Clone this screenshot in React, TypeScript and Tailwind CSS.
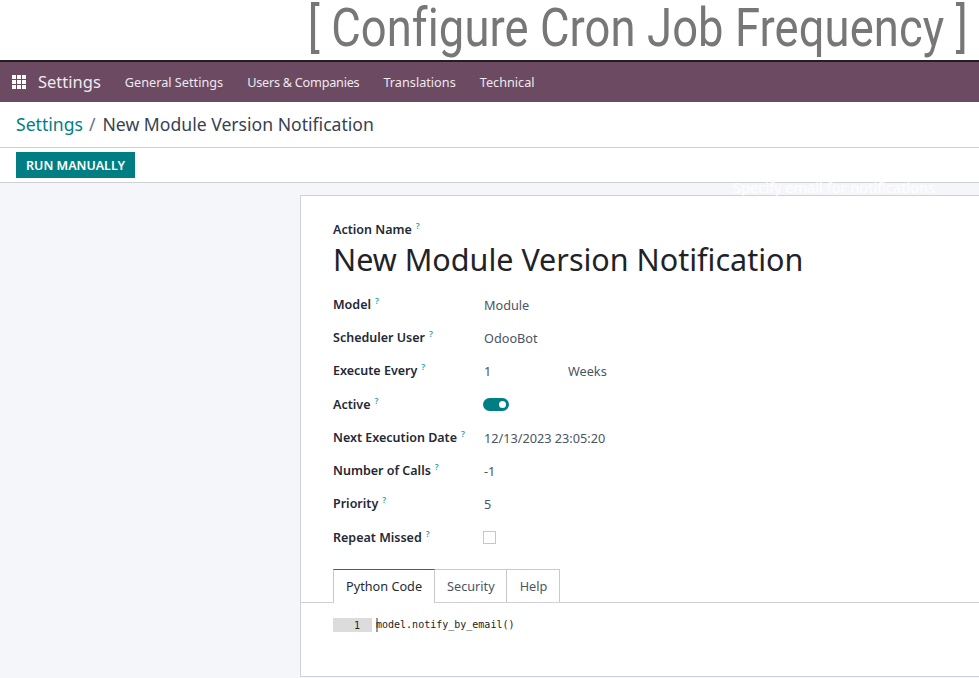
import React from "react";

const rows: { label: string; value: React.ReactNode }[] = [
  { label: "Model", value: "Module" },
  { label: "Scheduler User", value: "OdooBot" },
  {
    label: "Execute Every",
    value: (
      <span className="flex">
        <span className="w-[84px]">1</span>
        <span>Weeks</span>
      </span>
    ),
  },
  {
    label: "Active",
    value: (
      <span className="-ml-px -mt-px flex h-[13px] w-[26px] items-center justify-end rounded-full bg-[#017e84] pr-[3px]">
        <span className="h-[7px] w-[7px] rounded-full bg-white" />
      </span>
    ),
  },
  { label: "Next Execution Date", value: "12/13/2023 23:05:20" },
  { label: "Number of Calls", value: "-1" },
  { label: "Priority", value: "5" },
  {
    label: "Repeat Missed",
    value: <span className="-ml-px block h-[13px] w-[13px] border border-[#c4c7cc] bg-white" />,
  },
];

const Help = () => (
  <span className="relative top-[-5px] ml-[4px] align-baseline text-[8.5px] font-semibold leading-none text-[#17a2b8]">?</span>
);

export default function App() {
  return (
    <div className="relative h-[678px] w-[979px] overflow-hidden bg-white font-['Noto_Sans',sans-serif] text-[12.7px] text-[#374151]">
      <header className="flex h-[60px] items-start justify-end pr-[11px]">
        <h1 className="origin-right scale-x-[0.84] whitespace-nowrap font-['Roboto',sans-serif] text-[54px] font-normal leading-[56px] tracking-[0.1px] text-[#777777]">
          [ Configure Cron Job Frequency ]
        </h1>
      </header>
      <nav className="flex h-[42px] items-center border-t-2 border-[#1f1f1f] bg-[#6c4a62] text-white">
        <svg className="ml-[12px] h-[14px] w-[14px]" viewBox="0 0 14 14" fill="#fff">
          <rect x="0" y="0" width="4" height="4" />
          <rect x="5" y="0" width="4" height="4" />
          <rect x="10" y="0" width="4" height="4" />
          <rect x="0" y="5" width="4" height="4" />
          <rect x="5" y="5" width="4" height="4" />
          <rect x="10" y="5" width="4" height="4" />
          <rect x="0" y="10" width="4" height="4" />
          <rect x="5" y="10" width="4" height="4" />
          <rect x="10" y="10" width="4" height="4" />
        </svg>
        <span className="ml-[12px] text-[16.5px] text-[#f0e9ee]">Settings</span>
        <div className="ml-[24px] flex gap-[24px] pt-[1px] text-[12.7px] text-[#efe8ed]">
          <span>General Settings</span>
          <span className="tracking-[-0.25px]">Users &amp; Companies</span>
          <span>Translations</span>
          <span>Technical</span>
        </div>
      </nav>
      <div className="flex h-[46px] items-center border-b border-[#cfd0d2] pl-[16px] text-[17.6px] text-[#374151]">
        <span className="text-[#017e84]">Settings</span>
        <span className="ml-[6px] mr-[7px] text-[#6b7280]">/</span>
        <span>New Module Version Notification</span>
      </div>
      <div className="flex h-[35px] items-center border-b border-[#cfd0d2] pl-[16px]">
        <button className="flex h-[26px] w-[119px] items-center justify-center pt-[2px] bg-[#017e84] text-[12.5px] font-semibold text-white">
          RUN MANUALLY
        </button>
      </div>
      <main className="flex h-[495px] flex-col bg-[#f5f6fa] pl-[300px] pt-[12px]">
        <section className="flex h-[482px] flex-col border-y border-l border-[#cfd1d8] bg-white pt-[24px]">
          <div className="pl-[32px]">
            <div className="pt-[1px] text-[12.5px] font-semibold leading-[17px] text-[#1f2937]">
              Action Name
              <Help />
            </div>
            <div className="text-[30.5px] leading-[42px] text-[#1f2328]">
              New Module Version Notification
            </div>
            <div className="mt-[8px] flex h-[266px] flex-col">
              {rows.map((r) => (
                <div key={r.label} className="flex h-[33.25px] items-center">
                  <div className="w-[151px] pt-[1px] text-[12.5px] font-semibold text-[#1f2937]">
                    {r.label}
                    <Help />
                  </div>
                  <div className="pt-[1px] text-[12.7px] text-[#4b5563]">{r.value}</div>
                </div>
              ))}
            </div>
          </div>
          <div className="mt-[15px] flex h-[34px] border-b border-[#cfd1d8] pl-[32px] text-[12.7px]">
            <div className="-mb-px border-x border-t border-[#c8cad0] border-t-[#714b67] bg-white px-[12px] pt-[7px] text-[#1f2937]">
              Python Code
            </div>
            <div className="border-r border-t border-[#c8cad0] pl-[12px] pr-[11px] pt-[7px] text-[#4b5563]">Security</div>
            <div className="border-r border-t border-[#c8cad0] pl-[13px] pr-[12px] pt-[7px] text-[#4b5563]">Help</div>
          </div>
          <div className="ml-[32px] mt-[15px] flex h-[14px] items-center font-['DejaVu_Sans_Mono',monospace] text-[10px] text-[#222]">
            <span className="flex h-[14px] w-[39px] items-center justify-end bg-[#dcdcdc] pr-[12px]">1</span>
            <span className="ml-[4px] border-l-2 border-[#9a9a9a] leading-[14px]">
              <span className="-ml-[2px]">model.notify_by_email()</span>
            </span>
          </div>
        </section>
      </main>
      <div className="absolute left-[733px] top-[177px] text-[14.6px] leading-[20px] text-white/80">
        Specify email for notifications
      </div>
    </div>
  );
}
